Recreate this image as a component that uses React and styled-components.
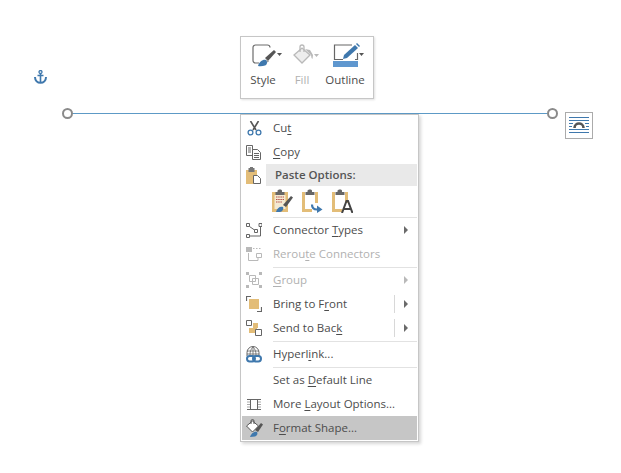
import React from "react";
import styled, { createGlobalStyle } from "styled-components";

const GlobalStyle = createGlobalStyle`
  html, body { margin: 0; padding: 0; background: #fff; }
  body { font-family: "Open Sans", "Noto Sans", "Liberation Sans", sans-serif; color: #4c4c4c; }
`;

const Stage = styled.div`
  position: relative;
  width: 621px;
  height: 473px;
  overflow: hidden;
  background: #fff;
`;

const Anchor = styled.svg`
  position: absolute;
  left: 34px;
  top: 70px;
`;

const LineShape = styled.div`
  position: absolute;
  left: 67px;
  top: 113px;
  width: 486px;
  height: 1px;
  background: #5d9ac6;
`;

const Handle = styled.div`
  position: absolute;
  top: -5px;
  left: ${(p) => (p.$end ? "480px" : "-5px")};
  width: 11px;
  height: 11px;
  box-sizing: border-box;
  border: 2px solid #8a8a8a;
  border-radius: 50%;
  background: #fff;
`;

const LayoutButton = styled.div`
  position: absolute;
  left: 565px;
  top: 112px;
  width: 28px;
  height: 27px;
  box-sizing: border-box;
  border: 1px solid #ababab;
  background: #fff;
  display: flex;
  align-items: center;
  justify-content: center;
`;

const MiniBar = styled.div`
  position: absolute;
  left: 240px;
  top: 36px;
  width: 134px;
  height: 63px;
  box-sizing: border-box;
  background: #fff;
  border: 1px solid #c6c6c6;
  box-shadow: 1px 1px 2px rgba(0, 0, 0, 0.12);
  display: flex;
  padding-top: 5px;
`;

const MiniTool = styled.div`
  width: ${(p) => p.$w}px;
  display: flex;
  flex-direction: column;
  align-items: center;
  gap: 4px;
  font-size: 11.5px;
  line-height: 15px;
  color: ${(p) => (p.$off ? "#b1b1b1" : "#4c4c4c")};
`;

const Menu = styled.div`
  position: absolute;
  left: 240px;
  top: 114px;
  width: 179px;
  height: 328px;
  box-sizing: border-box;
  padding: 1px;
  background: #fff;
  border: 1px solid #c6c6c6;
  box-shadow: 2px 2px 3px rgba(0, 0, 0, 0.16);
  display: flex;
  flex-direction: column;
`;

const Item = styled.div`
  height: 24px;
  flex: none;
  display: flex;
  align-items: center;
  font-size: 11.5px;
  color: ${(p) => (p.$off ? "#b1b1b1" : "#4c4c4c")};
  background: ${(p) => (p.$active ? "#c6c6c6" : "transparent")};
  u { text-underline-offset: 2px; text-decoration-thickness: 1px; }
`;

const IconSlot = styled.span`
  width: 31px;
  flex: none;
  display: flex;
  justify-content: center;
  align-items: center;
  padding-right: 7px;
  box-sizing: border-box;
  height: 100%;
`;

const Label = styled.span`
  flex: 1;
  white-space: nowrap;
  position: relative;
  top: -1px;
`;

const Submenu = styled.span`
  width: 23px;
  height: 18px;
  flex: none;
  display: flex;
  align-items: center;
  justify-content: center;
  box-sizing: border-box;
  border-left: ${(p) => (p.$split ? "1px solid #d8d8d8" : "1px solid transparent")};
`;

const Arrow = styled.span`
  width: 0;
  height: 0;
  border-style: solid;
  border-width: 4px 0 4px 4px;
  border-color: transparent transparent transparent ${(p) => (p.$off ? "#b9b9b9" : "#6a6a6a")};
`;

const PasteHeader = styled.div`
  height: 22px;
  flex: none;
  display: flex;
  align-items: center;
`;

const PasteSlot = styled.span`
  width: 24px;
  flex: none;
  display: flex;
  justify-content: center;
`;

const PasteTitle = styled.div`
  flex: 1;
  height: 100%;
  display: flex;
  align-items: center;
  padding-left: 9px;
  padding-bottom: 1px;
  box-sizing: border-box;
  font-size: 11.5px;
  font-weight: 600;
  background: #e9e9e9;
  color: #555;
`;

const PasteRow = styled.div`
  height: 30px;
  flex: none;
  display: flex;
  align-items: center;
  gap: 9px;
  padding-left: 30px;
`;

const Separator = styled.div`
  height: 2px;
  flex: none;
  margin-left: 31px;
  display: flex;
  align-items: center;
  &::after { content: ""; flex: 1; height: 1px; background: #e2e2e2; }
`;

const gold = "#e3bd78";
const blue = "#3f78ad";
const grey = "#6d6d6d";
const faint = "#b9b9b9";

const StyleIcon = () => (
  <svg width="40" height="26" viewBox="0 0 40 26">
    <path d="M27 5V5.5A2.5 2.5 0 0 0 24.5 3H12.5A2.5 2.5 0 0 0 10 5.5V18.5A2.5 2.5 0 0 0 12.5 21H16" fill="none" stroke={grey} strokeWidth="1.2" />
    <path d="M22 16l9-8 2 2-8 9z" fill="#555" />
    <path d="M23 16.5l3 3-2 1z" fill="#9a9a9a" />
    <path d="M15 24c1-4 5-7 8-6 2 2 1 5-1 5.5-2 .8-5 1-7 .5z" fill={blue} />
    <path d="M34 11h5l-2.5 3z" fill="#555" />
  </svg>
);

const FillIcon = () => (
  <svg width="36" height="26" viewBox="0 0 36 26">
    <path d="M10 13l8-7 8 7-8 8z" fill="#eee" stroke={faint} strokeWidth="1.3" />
    <path d="M16 10V5a2 2 0 014 0v5" fill="none" stroke={faint} strokeWidth="1.3" />
    <path d="M21 7l6 6 .5 3 1 1 .5-4-3-5z" fill={faint} />
    <path d="M30 12h5l-2.5 3z" fill={faint} />
  </svg>
);

const OutlineIcon = () => (
  <svg width="52" height="26" viewBox="0 0 52 26">
    <path d="M33 3H15.5v14.5H24M36 17.5h2.5V11" fill="none" stroke="#666" strokeWidth="1.2" />
    <path d="M24 17l1-4L36 3l3 3L28 16z" fill={blue} />
    <path d="M37 2l1-1 3 3-1 1z" fill={blue} />
    <rect x="14" y="19" width="25" height="6" fill="#5f97cf" />
    <path d="M40 11h5l-2.5 3z" fill="#555" />
  </svg>
);

const Scissors = () => (
  <svg width="15" height="15" viewBox="0 0 15 15" fill="none">
    <path d="M3.5 0l5.5 9M11.5 0L6 9" stroke="#555" strokeWidth="1.6" />
    <circle cx="3.5" cy="11.5" r="2.4" stroke={blue} strokeWidth="1.3" />
    <circle cx="11.5" cy="11.5" r="2.4" stroke={blue} strokeWidth="1.3" />
  </svg>
);

const CopyIcon = () => (
  <svg width="16" height="15" viewBox="0 0 16 15" fill="none" stroke="#666">
    <path d="M.5.5h6v10h-6zM2 3h3M2 5h3M2 7h3" />
    <path d="M6.5 4.5h5l3 3v7h-8zM8 8.5h5M8 10.5h5M8 12.5h5" fill="#fff" />
  </svg>
);

const ClipboardBase = ({ children, filled }) => (
  <svg width="21" height="24" viewBox="0 0 21 24" fill="none">
    {filled && <rect x="0" y="3" width="16" height="20" fill={gold} />}
    {filled && <rect x="2.5" y="6" width="11" height="14" fill="#f4ead2" />}
    {!filled && <path d="M1.5 3v18.5H10M14.5 3v11" stroke={gold} strokeWidth="3" />}
    <path d="M3.5 3h2V1.5L7 .5h2l1 1V3h2.5v3h-9z" fill="#666" />
    {children}
  </svg>
);

const PasteSmall = () => (
  <svg width="16" height="17" viewBox="0 0 16 17">
    <rect x="0" y="3" width="11" height="14" fill={gold} />
    <rect x="2.5" y="1" width="6" height="4" fill="#777" />
    <rect x="4" y="0" width="3" height="2" fill="#777" />
    <path d="M7.5 8.5h4l3 3v5h-7z" fill="#fff" stroke="#666" />
  </svg>
);

const ConnectorIcon = () => (
  <svg width="16" height="15" viewBox="0 0 16 15" fill="none" stroke="#666">
    <path d="M.5.5h3v3h-3zM13 .5h3v3h-3zM8.5 6.5h3v3h-3zM.5 11.5h3v3h-3z" />
    <path d="M3.5 3.5l5 3.5M14.5 3.5V13H3.5" />
  </svg>
);

const RerouteIcon = () => (
  <svg width="16" height="15" viewBox="0 0 16 15" fill="none" stroke={faint}>
    <rect x="0" y="0" width="6" height="5" fill={faint} stroke="none" />
    <path d="M7 1.5h8" strokeDasharray="1.5 1.5" />
    <path d="M2.5 6v7.5H12V10M10.5 6.5h5v4h-5z" />
  </svg>
);

const GroupIcon = () => (
  <svg width="16" height="16" viewBox="0 0 16 16" fill="none" stroke={faint}>
    <path d="M3.5 3.5h6v6h-6zM6.5 6.5h6v6h-6z" />
    <path d="M0 0h3v3H0zM13 0h3v3h-3zM0 13h3v3H0zM13 13h3v3h-3z" fill={faint} stroke="none" />
  </svg>
);

const FrontIcon = () => (
  <svg width="16" height="16" viewBox="0 0 16 16" fill="none" stroke="#666">
    <path d="M.5 5V.5H5M11 15.5h4.5V11" strokeWidth="1.2" />
    <rect x="3" y="3" width="10" height="10" fill={gold} stroke="none" />
  </svg>
);

const BackIcon = () => (
  <svg width="16" height="16" viewBox="0 0 16 16" fill="none" stroke="#666">
    <path d="M.5.5h5v5h-5z" />
    <path d="M7 3h5v5h-1v5H3V8h4z" fill={gold} stroke="none" />
    <path d="M9.5 9.5h6v6h-6z" fill="#fff" />
  </svg>
);

const HyperlinkIcon = () => (
  <svg width="16" height="17" viewBox="0 0 16 17" fill="none">
    <path d="M1 10V6.500a6 6 0 0112 0V10" stroke="#666" />
    <path d="M1 5h12M1 8h12M7 1v8M4 9c0-3 .7-6 3-8 2.300 2 3 5 3 8" stroke="#666" strokeWidth=".8" />
    <rect x="1" y="10" width="8" height="5.500" rx="2.700" fill="#fff" stroke={blue} strokeWidth="2" />
    <rect x="7" y="10" width="8" height="5.500" rx="2.700" stroke={blue} strokeWidth="2" />
  </svg>
);

const LayoutOptionsIcon = () => (
  <svg width="14" height="11" viewBox="0 0 14 11" fill="none" stroke="#666">
    <path d="M0 .5h14M0 10.500h14M3.500 .5v10M10.500 .5v10" />
    <path d="M0 3h3M0 5.500h3M0 8h3M11 3h3M11 5.500h3M11 8h3" stroke="#aaa" />
  </svg>
);

const FormatShapeIcon = () => (
  <svg width="17" height="18" viewBox="0 0 17 18">
    <path d="M.5 7l6-5 6 5-6 6z" fill="#fff" stroke="#555" />
    <path d="M5 5V2a1.500 1.500 0 013 0v3" fill="none" stroke="#555" />
    <path d="M9 11l6-7 2 1.500-5 7.500z" fill="#555" />
    <path d="M4 18c1-3 4-6 7-5 1 2 0 4-2 4.500z" fill={blue} />
  </svg>
);

const LayoutGlyph = () => (
  <svg width="24" height="19" viewBox="0 0 24 19" fill="none" stroke="#3f78ad">
    <path d="M2 1.500h20M2 4.500h20M2 7.500h4M18 7.500h4M2 10.500h3M19 10.500h3M2 13.500h20M2 16.500h20" />
    <path d="M7.500 12c0-6 9-6 9 0" stroke="#555" strokeWidth="2.600" />
  </svg>
);

const Row = ({ icon, children, off, split, arrow, active }) => (
  <Item $off={off} $active={active}>
    <IconSlot>{icon}</IconSlot>
    <Label>{children}</Label>
    {arrow && (
      <Submenu $split={split}>
        <Arrow $off={off} />
      </Submenu>
    )}
  </Item>
);

export default function App() {
  return (
    <Stage>
      <GlobalStyle />
      <Anchor width="13" height="14" viewBox="0 0 13 14" fill="none" stroke={blue}>
        <circle cx="6.500" cy="2" r="1.500" strokeWidth="1.300" />
        <path d="M6.500 3.500v9.500M3.500 5.500h6" strokeWidth="1.600" />
        <path d="M1 7c0 3.500 2.500 5.800 5.500 5.800S12 10.500 12 7" strokeWidth="2" />
      </Anchor>
      <LineShape>
        <Handle />
        <Handle $end />
      </LineShape>
      <LayoutButton>
        <LayoutGlyph />
      </LayoutButton>

      <MiniBar>
        <MiniTool $w={44}><StyleIcon />Style</MiniTool>
        <MiniTool $w={34} $off><FillIcon />Fill</MiniTool>
        <MiniTool $w={52}><OutlineIcon />Outline</MiniTool>
      </MiniBar>

      <Menu>
        <Row icon={<Scissors />}>Cu<u>t</u></Row>
        <Row icon={<CopyIcon />}><u>C</u>opy</Row>
        <PasteHeader>
          <PasteSlot><PasteSmall /></PasteSlot>
          <PasteTitle>Paste Options:</PasteTitle>
        </PasteHeader>
        <PasteRow>
          <ClipboardBase filled>
            <path d="M4 8h8M4 10.500h8M4 13h6" stroke="#b5534c" strokeWidth="1.200" strokeDasharray="1.500 .7" />
            <path d="M4 23c1-4 4-6 7-5 1 2-1 5-3 5z" fill={blue} />
            <path d="M11 16l8-9 2 1.500-7 9.500z" fill="#555" />
          </ClipboardBase>
          <ClipboardBase>
            <path d="M10 15.500c0 3 2 5 5 5h1" stroke={blue} strokeWidth="2.200" />
            <path d="M15 16.500l5.500 4-5.500 3.500z" fill={blue} />
          </ClipboardBase>
          <ClipboardBase>
            <path d="M10 24l4.500-12h1.500l4.500 12M12 20h6.500" stroke="#444" strokeWidth="2" />
          </ClipboardBase>
        </PasteRow>
        <Separator />
        <Row icon={<ConnectorIcon />} arrow>Connector <u>T</u>ypes</Row>
        <Row icon={<RerouteIcon />} off>Rerou<u>t</u>e Connectors</Row>
        <Separator />
        <Row icon={<GroupIcon />} off arrow><u>G</u>roup</Row>
        <Row icon={<FrontIcon />} arrow split>Bring to F<u>r</u>ont</Row>
        <Row icon={<BackIcon />} arrow split>Send to Bac<u>k</u></Row>
        <Separator />
        <Row icon={<HyperlinkIcon />}>Hyperl<u>i</u>nk...</Row>
        <Separator />
        <Row>Set as <u>D</u>efault Line</Row>
        <Row icon={<LayoutOptionsIcon />}>More <u>L</u>ayout Options...</Row>
        <Row icon={<FormatShapeIcon />} active>F<u>o</u>rmat Shape...</Row>
      </Menu>
    </Stage>
  );
}
